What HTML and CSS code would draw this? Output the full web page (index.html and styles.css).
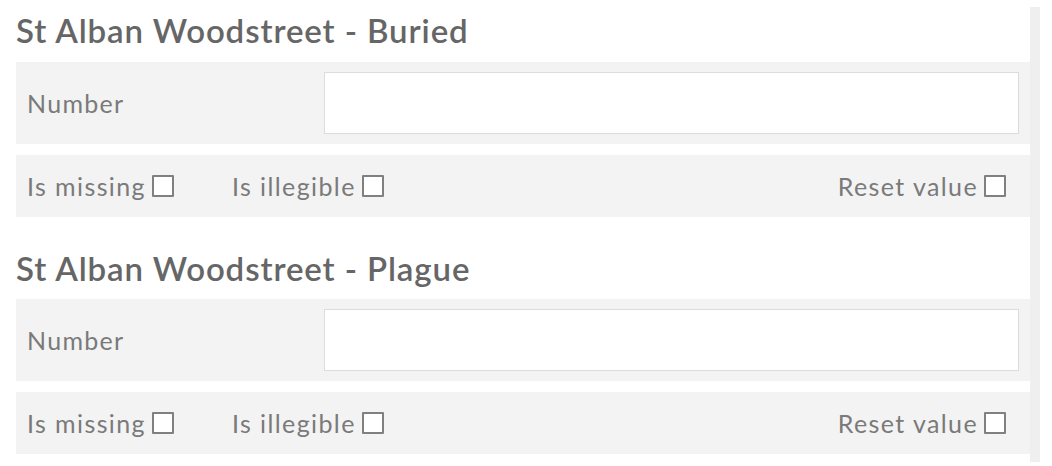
FILE: index.html
```html
<!DOCTYPE html>
<html lang="en">
<head>
<meta charset="utf-8">
<title>Counts</title>
<link rel="stylesheet" href="styles.css">
</head>
<body>
<div class="page">
  <main class="form">
    <section class="entry">
      <h2 class="entry-title">St Alban Woodstreet - Buried</h2>
      <div class="field-row">
        <label class="field-label" for="buried">Number</label>
        <input class="field-input" id="buried" type="text">
      </div>
      <div class="flag-row">
        <label class="flag">Is missing <input class="box" type="checkbox"></label>
        <label class="flag">Is illegible <input class="box" type="checkbox"></label>
        <label class="flag flag-reset">Reset value <input class="box" type="checkbox"></label>
      </div>
    </section>
    <section class="entry">
      <h2 class="entry-title">St Alban Woodstreet - Plague</h2>
      <div class="field-row">
        <label class="field-label" for="plague">Number</label>
        <input class="field-input" id="plague" type="text">
      </div>
      <div class="flag-row">
        <label class="flag">Is missing <input class="box" type="checkbox"></label>
        <label class="flag">Is illegible <input class="box" type="checkbox"></label>
        <label class="flag flag-reset">Reset value <input class="box" type="checkbox"></label>
      </div>
    </section>
  </main>
  <div class="side-bar"></div>
</div>
</body>
</html>
```
FILE: styles.css
```css
html, body {
  margin: 0;
  padding: 0;
  background: #ffffff;
}

body {
  font-family: Lato, "Open Sans", "Liberation Sans", sans-serif;
  color: #777777;
}

.page {
  display: flex;
  align-items: flex-start;
  padding-left: 16px;
}

.form {
  width: 1014px;
  padding-top: 11px;
  display: flex;
  flex-direction: column;
  gap: 32px;
}

.entry {
  display: flex;
  flex-direction: column;
}

.entry-title {
  margin: 0 0 11px;
  font-size: 33px;
  line-height: 1.2;
  font-weight: 600;
  letter-spacing: 0.9px;
  color: #666666;
}

.field-row {
  display: flex;
  align-items: center;
  background: #f3f3f3;
  padding: 10px 11px;
  height: 62px;
  box-sizing: content-box;
}

.field-label {
  width: 297px;
  flex: none;
  font-size: 25px;
  letter-spacing: 1.3px;
  color: #7a7a7a;
}

.field-input {
  flex: 1;
  height: 62px;
  box-sizing: border-box;
  border: 1px solid #dcdcdc;
  background: #ffffff;
  margin: 0;
  padding: 0 10px;
  outline: none;
}

.flag-row {
  margin-top: 11px;
  display: flex;
  align-items: center;
  gap: 58px;
  background: #f3f3f3;
  height: 62px;
  padding: 0 24px 0 11px;
}

.flag {
  display: flex;
  align-items: center;
  gap: 6px;
  font-size: 25px;
  letter-spacing: 1.4px;
  color: #7a7a7a;
}

.flag-reset {
  margin-left: auto;
}

.box {
  appearance: none;
  -webkit-appearance: none;
  margin: 0;
  width: 22px;
  height: 22px;
  box-sizing: border-box;
  border: 2px solid #808080;
  border-radius: 1px;
  background: #ffffff;
}

.side-bar {
  width: 10px;
  height: 455px;
  margin-top: 7px;
  background: #efefef;
  flex: none;
}
```
